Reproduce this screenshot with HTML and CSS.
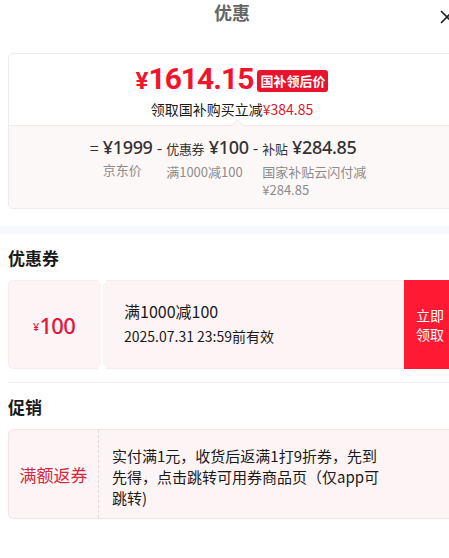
FILE: index.html
```html
<!DOCTYPE html>
<html lang="zh-CN">
<head>
  <meta charset="UTF-8" />
  <meta name="viewport" content="width=device-width, initial-scale=1" />
  <title>优惠</title>
  <link rel="stylesheet" href="styles.css">
</head>
<body>
  <div class="sheet">

    <!-- Header -->
    <div class="sheet-head">
      <span class="sheet-title">优惠</span>
      <span class="sheet-close">
        <svg width="14" height="14" viewBox="0 0 14 14"><path d="M1 1 L13 13 M13 1 L1 13" stroke="#222" stroke-width="1.6" fill="none"/></svg>
      </span>
    </div>

    <!-- Price summary -->
    <div class="price-card">
      <div class="price-top">
        <div class="final-line">
          <span class="final-price"><span class="yen">¥</span>1614.15</span>
          <span class="final-tag">国补领后价</span>
        </div>
        <div class="saving">领取国补购买立减<span class="red">¥384.85</span></div>
      </div>
      <div class="price-bottom">
        <span class="notch"></span>
        <div class="formula">
          <div class="op">=</div>
          <div class="term">
            <div class="amt">¥1999</div>
            <div class="note">京东价</div>
          </div>
          <div class="op">-</div>
          <div class="term">
            <div class="amt"><small>优惠券</small> ¥100</div>
            <div class="note">满1000减100</div>
          </div>
          <div class="op">-</div>
          <div class="term">
            <div class="amt"><small>补贴</small> ¥284.85</div>
            <div class="note">国家补贴云闪付减</div>
            <div class="note">¥284.85</div>
          </div>
        </div>
      </div>
    </div>

    <div class="band"></div>

    <!-- Coupons -->
    <h2 class="sec-title">优惠券</h2>
    <div class="coupon">
      <div class="coupon-value"><span class="yen-s">¥</span>100</div>
      <div class="coupon-gap"></div>
      <div class="coupon-info">
        <div class="coupon-name">满1000减100</div>
        <div class="coupon-date">2025.07.31 23:59前有效</div>
      </div>
      <button class="coupon-btn">立即<br>领取</button>
    </div>

    <div class="rule"></div>

    <!-- Promotions -->
    <h2 class="sec-title">促销</h2>
    <div class="promo">
      <div class="promo-tag">满额返券</div>
      <div class="promo-text">实付满1元，收货后返满1打9折券，先到先得，点击跳转可用券商品页（仅app可跳转)</div>
    </div>

  </div>
</body>
</html>
```

FILE: styles.css
```css
html, body {
  margin: 0;
  padding: 0;
  overflow: hidden;
  background: #fff;
}
body {
  font-family: "Noto Sans CJK SC", "Noto Sans", sans-serif;
  color: #1a1a1a;
}
.sheet {
  width: 464px;
  padding: 0 8px;
  box-sizing: border-box;
}
.sheet-head {
  position: relative;
  height: 53px;
  text-align: center;
}
.sheet-title {
  display: inline-block;
  font-size: 18px;
  line-height: 24px;
  font-weight: 700;
  color: #666;
}
.sheet-close {
  position: absolute;
  right: 2px;
  top: 5px;
}
.price-card {
  border: 1px solid #ececec;
  border-radius: 5px;
  overflow: hidden;
}
.price-top {
  height: 71px;
  text-align: center;
  padding-top: 10px;
  box-sizing: border-box;
}
.final-line {
  display: flex;
  justify-content: center;
  align-items: center;
  gap: 4px;
  height: 32px;
}
.final-price {
  font-family: Roboto, "Noto Sans", sans-serif;
  font-weight: 700;
  font-size: 30px;
  line-height: 32px;
  letter-spacing: -1px;
  color: #f2142d;
}
.final-price .yen {
  font-size: 24px;
  margin-right: 1px;
}
.final-tag {
  background: #e8142d;
  color: #fff;
  font-size: 13px;
  font-weight: 700;
  line-height: 22px;
  padding: 0 3px;
  border-radius: 3px;
  margin-top: 2px;
}
.saving {
  font-size: 14px;
  line-height: 20px;
  color: #1a1a1a;
  margin-top: 3px;
}
.red {
  color: #e0162b;
}
.price-bottom {
  position: relative;
  background: #fdf8f8;
  border-top: 1px solid #f5eaea;
  height: 83px;
  padding-top: 7px;
  box-sizing: border-box;
}
.notch {
  position: absolute;
  left: 224px;
  top: -5px;
  width: 8px;
  height: 8px;
  background: #fdf8f8;
  border-left: 1px solid #f5eaea;
  border-top: 1px solid #f5eaea;
  transform: rotate(45deg);
}
.formula {
  display: flex;
  justify-content: center;
  gap: 4px;
  padding-right: 8px;
}
.op {
  font-size: 16px;
  line-height: 28px;
  color: #333;
}
.term .amt {
  font-family: "Noto Sans", "Noto Sans CJK SC", sans-serif;
  font-size: 18px;
  line-height: 28px;
  font-weight: 500;
  color: #333;
  letter-spacing: -0.3px;
}
.term .amt small {
  font-family: "Noto Sans CJK SC", sans-serif;
  font-size: 13px;
  font-weight: 400;
}
.term .note {
  font-size: 13px;
  line-height: 17px;
  color: #8c8c8c;
}
.term .note:first-of-type {
  margin-top: 1px;
}
.term .note + .note {
  margin-top: 1px;
}
.band {
  height: 8px;
  background: #f7f8fc;
  margin: 17px -8px 0;
}
.sec-title {
  font-size: 17px;
  font-weight: 700;
  line-height: 22px;
  margin: 13px 0 11px;
  color: #1a1a1a;
}
.coupon {
  display: flex;
  height: 89px;
}
.coupon-value {
  width: 90px;
  background: #fdf4f5;
  border-radius: 5px 0 0 5px;
  border: 1px solid #f8ecee;
  border-right: none;
  display: flex;
  align-items: center;
  justify-content: center;
  font-family: "Noto Sans", sans-serif;
  font-size: 22px;
  font-weight: 500;
  color: #e5163a;
  letter-spacing: -0.8px;
}
.coupon-value .yen-s {
  font-size: 11px;
  margin-right: 1px;
  margin-top: 4px;
}
.coupon-gap {
  width: 6px;
  position: relative;
  background: linear-gradient(#fdf4f5, #fdf4f5) left / 2px 100% no-repeat,
              linear-gradient(#fdf4f5, #fdf4f5) right / 2px 100% no-repeat;
}
.coupon-gap::before,
.coupon-gap::after {
  content: "";
  position: absolute;
  left: -1px;
  width: 8px;
  height: 8px;
  border-radius: 50%;
  background: #fff;
}
.coupon-gap::before {
  top: -4px;
}
.coupon-gap::after {
  bottom: -4px;
}
.coupon-info {
  flex: 1;
  background: #fdf4f5;
  border-top: 1px solid #f8ecee;
  border-bottom: 1px solid #f8ecee;
  padding: 19px 0 0 19px;
}
.coupon-name {
  font-size: 16px;
  line-height: 22px;
  color: #1a1a1a;
}
.coupon-date {
  font-size: 14px;
  line-height: 22px;
  color: #1a1a1a;
  margin-top: 3px;
}
.coupon-btn {
  width: 52px;
  border: none;
  background: #fe1a32;
  color: #fff;
  font-family: "Noto Sans CJK SC", sans-serif;
  font-size: 14px;
  line-height: 19px;
  padding: 0;
}
.rule {
  height: 1px;
  background: #efefef;
  margin-top: 13px;
}
.promo {
  display: flex;
  height: 90px;
  background: #fdf4f5;
  border: 1px solid #f5e3e6;
  border-radius: 5px;
  box-sizing: border-box;
}
.promo-tag {
  width: 89px;
  border-right: 1px dashed #e4d7da;
  display: flex;
  align-items: center;
  justify-content: center;
  font-size: 17px;
  color: #d6283f;
}
.promo-text {
  width: 270px;
  padding: 15px 0 0 13px;
  font-size: 15px;
  line-height: 21px;
  color: #1a1a1a;
}
```
